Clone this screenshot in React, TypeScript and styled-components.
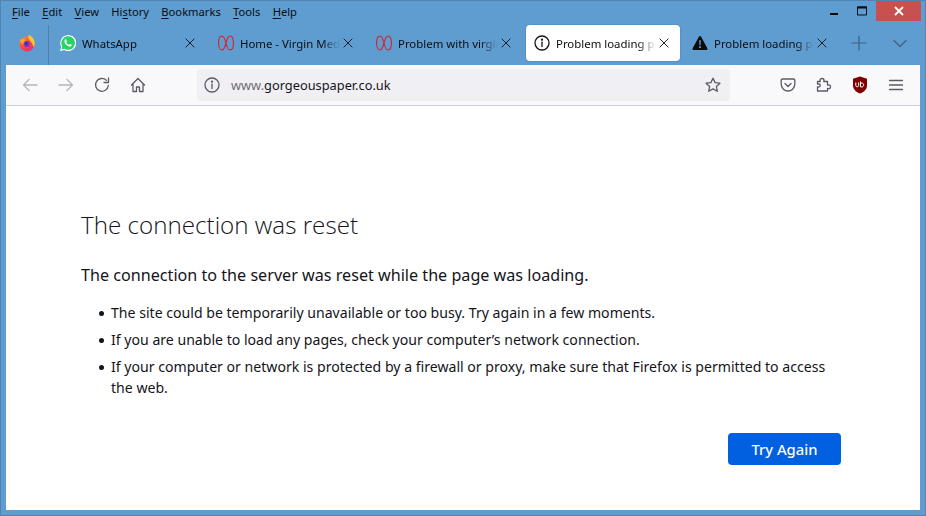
import React from 'react'
import styled, { createGlobalStyle } from 'styled-components'

const GlobalStyle = createGlobalStyle`
  html, body { margin: 0; padding: 0; background: #5f9dd1; }
  * { box-sizing: border-box; }
`

const Frame = styled.div`
  width: 926px;
  height: 516px;
  background: #5f9dd1;
  border: 1px solid #4f84b3;
  padding: 0 0 5px 0;
  display: flex;
  flex-direction: column;
  font-family: 'Noto Sans', 'Open Sans', sans-serif;
  overflow: hidden;
`

const MenuRow = styled.div`
  height: 24px;
  display: flex;
  align-items: flex-start;
  padding: 0 4px 0 11px;
`

const Menu = styled.div`
  display: flex;
  gap: 12.3px;
  flex: 1;
  padding-top: 2px;
`

const MenuItem = styled.span`
  font-size: 11.2px;
  line-height: 17px;
  color: #0c0c0d;
  u { text-underline-offset: 2px; }
`

const WinButton = styled.div<{ $close?: boolean }>`
  width: ${p => (p.$close ? '45px' : '28px')};
  height: 20px;
  background: ${p => (p.$close ? '#c75050' : 'transparent')};
  display: flex;
  align-items: center;
  justify-content: center;
`

const TabRow = styled.div`
  height: 40px;
  display: flex;
  align-items: flex-start;
  padding: 0 0 0 5px;
`

const FoxButton = styled.div`
  width: 43px;
  height: 40px;
  flex: none;
  border-right: 1px solid #4f7ea8;
  margin-right: 3px;
  padding-right: 1px;
  display: flex;
  align-items: center;
  justify-content: center;
  padding-bottom: 4px;
`

const Tab = styled.div<{ $active?: boolean }>`
  width: 154px;
  height: 36px;
  flex: none;
  margin-right: 4px;
  padding: 0 8px;
  display: flex;
  align-items: center;
  border-radius: 4px;
  background: ${p => (p.$active ? '#ffffff' : 'transparent')};
  box-shadow: ${p => (p.$active ? '0 0 2px rgba(0,0,0,0.25)' : 'none')};
`

const TabIcon = styled.div`
  width: 16px;
  height: 16px;
  flex: none;
  margin-right: 6px;
  display: flex;
`

const TabLabel = styled.span`
  flex: 1;
  min-width: 0;
  padding-top: 1px;
  font-size: 11.4px;
  line-height: 18px;
  color: #0c0c0d;
  white-space: nowrap;
  mask-image: linear-gradient(to right, #000 82%, transparent 100%);
`

const TabClose = styled.div`
  width: 16px;
  height: 16px;
  flex: none;
  display: flex;
  align-items: center;
  justify-content: center;
`

const TabAction = styled.div<{ $w: number }>`
  width: ${p => p.$w}px;
  height: 36px;
  flex: none;
  display: flex;
  align-items: center;
  justify-content: center;
`

const Toolbar = styled.div`
  height: 41px;
  margin: 0 5px;
  background: #f9f9fb;
  border-bottom: 1px solid #cfcfd8;
  display: flex;
  align-items: center;
  padding: 0 7px 1px 6px;
`

const ToolButton = styled.div<{ $w?: number }>`
  width: ${p => p.$w ?? 36}px;
  height: 32px;
  flex: none;
  display: flex;
  align-items: center;
  justify-content: center;
`

const UrlBar = styled.div`
  width: 533px;
  height: 32px;
  margin: 0 40px 0 41px;
  flex: none;
  background: #f0f0f4;
  border-radius: 4px;
  display: flex;
  align-items: center;
  padding: 0 9px 0 7px;
`

const UrlText = styled.span`
  flex: 1;
  margin-left: 11px;
  font-size: 12.8px;
  color: #15141a;
  span { color: #6d6d76; }
`

const Page = styled.main`
  flex: 1;
  margin: 0 5px;
  background: #ffffff;
  padding: 103px 0 0 75px;
  color: #15141a;
`

const Title = styled.h1`
  margin: 0 0 23px;
  font-family: 'Open Sans', 'Noto Sans', sans-serif;
  font-weight: 300;
  font-size: 24.2px;
  line-height: 32px;
`

const Lead = styled.p`
  margin: 0 0 17px;
  font-size: 16.15px;
  line-height: 22px;
`

const Reasons = styled.ul`
  margin: 0;
  padding: 0 0 0 30px;
  width: 750px;
  list-style: none;
  font-size: 14.1px;
  line-height: 20.5px;
  li { margin-bottom: 6.7px; }
  li::before {
    content: '';
    float: left;
    width: 5px;
    height: 5px;
    margin: 8px 0 0 -12px;
    border-radius: 50%;
    background: #15141a;
  }
`

const Actions = styled.div`
  width: 760px;
  display: flex;
  justify-content: flex-end;
  margin-top: 35px;
`

const Retry = styled.button`
  width: 113px;
  height: 32px;
  border: none;
  border-radius: 4px;
  background: #0060df;
  color: #fbfbfe;
  font-family: inherit;
  font-size: 14.8px;
  font-weight: 500;
  padding: 0;
`

const Glyph = ({ children, size = 16, color = '#5b5b66', width = 1.3 }: { children: React.ReactNode; size?: number; color?: string; width?: number }) => (
  <svg width={size} height={size} viewBox="0 0 16 16" fill="none" stroke={color} strokeWidth={width} strokeLinecap="round" strokeLinejoin="round">
    {children}
  </svg>
)

const CloseIcon = () => (
  <Glyph size={10} color="#15141a" width={1.5}>
    <path d="M1.500 1.500l13 13M14.500 1.500l-13 13" />
  </Glyph>
)

const InfoIcon = ({ color = '#15141a', width = 1.3 }: { color?: string; width?: number }) => (
  <Glyph color={color} width={width}>
    <circle cx="8" cy="8" r="7" />
    <path d="M8 7.200v4.300" />
    <circle cx="8" cy="4.700" r=".5" fill={color} />
  </Glyph>
)

const VirginIcon = () => (
  <svg width="16" height="16" viewBox="0 0 16 16" fill="none" stroke="#d3222f" strokeWidth="1.1">
    <path d="M7.800 7.500C7 4 5.700 1 3.700 1 1.700 1 .6 3.900.6 7.800c0 3.900 1.200 7.200 3.200 7.200 2.100 0 3.300-3.500 4.200-7 .9-3.600 2-7 4.200-7 2 0 3.200 3.100 3.200 7s-1.200 7-3.200 7c-2 0-3.500-3.600-4.400-7.500z" />
  </svg>
)

const WhatsAppIcon = () => (
  <svg width="16" height="16" viewBox="0 0 16 16">
    <path d="M0 16l1.200-4.200A8 8 0 1 1 4.300 15z" fill="#fff" />
    <path d="M1.400 14.600l.9-3.100A6.800 6.800 0 1 1 4.600 13.800z" fill="#25d366" />
    <path d="M5.900 4.200c-.3 0-.6.1-.8.4-.4.4-.8 1-.7 1.800.1 1 .7 2.200 1.800 3.300 1.200 1.100 2.400 1.800 3.600 1.900.8 0 1.400-.4 1.700-.9.2-.3.2-.7.2-.9-.5-.4-1.100-.7-1.700-.9-.2 0-.3 0-.4.2l-.5.6c-.1.1-.3.1-.4.1-1-.4-1.900-1.200-2.400-2.200-.1-.1 0-.3.1-.4l.4-.5c.1-.1.1-.3 0-.4l-.6-1.800c-.1-.2-.2-.3-.3-.3z" fill="#fff" />
  </svg>
)

const WarningIcon = () => (
  <svg width="16" height="16" viewBox="0 0 16 16">
    <path d="M8 1c-.4 0-.8.2-1 .6L.7 13.200c-.5 1 .1 1.800 1 1.800h12.600c.9 0 1.500-.8 1-1.800L9 1.600C8.800 1.200 8.400 1 8 1z" fill="#0c0c0d" />
    <path d="M7.200 5.200h1.600l-.2 5H7.400zM7.100 11.300h1.800v1.600H7.100z" fill="#5f9dd1" />
  </svg>
)

const FirefoxIcon = () => (
  <svg width="16" height="18" viewBox="0 0 16 18">
    <defs>
      <linearGradient id="fx" x1="0.1" y1="0.1" x2="0.7" y2="1">
        <stop offset="0" stopColor="#ff8a2e" />
        <stop offset=".55" stopColor="#f9453f" />
        <stop offset="1" stopColor="#e5307a" />
      </linearGradient>
    </defs>
    <circle cx="8" cy="10" r="7.600" fill="url(#fx)" />
    <path d="M9.800.8c2.200 1.400 5.800 3.800 6 8.400 0 1.200-.4 2.800-1.300 4-.8-2.600-1.500-5.200-4-7.300C9.300 4.500 9.200 2.500 9.800.8z" fill="#ffc42e" />
    <path d="M1 6c2-1.300 4.500-1.300 6.500.2C5 6.700 3.800 8 4 10.500 2.400 9.500 1.400 7.800 1 6z" fill="#ffa52e" />
    <circle cx="7.800" cy="10" r="2.900" fill="#6f35c9" />
    <circle cx="7.300" cy="9.500" r="1.100" fill="#3c1f8f" />
  </svg>
)

const UBlockIcon = () => (
  <svg width="16" height="18" viewBox="0 0 16 18">
    <path d="M8 .6l7 2.200v6.400c0 4.200-3.200 7-7 8.200-3.800-1.200-7-4-7-8.200V2.800z" fill="#800000" />
    <path d="M3.800 6.500v3.200c0 1.400 2.800 1.400 2.800 0V6.500M8.500 5.500v5.400H10c2.200 0 2.200-3.800 0-3.800H8.500" fill="none" stroke="#fff" strokeWidth="1" />
  </svg>
)

const tabs = [
  { title: 'WhatsApp', icon: <WhatsAppIcon /> },
  { title: 'Home - Virgin Med', icon: <VirginIcon /> },
  { title: 'Problem with virgin', icon: <VirginIcon /> },
  { title: 'Problem loading pa', icon: <InfoIcon />, active: true },
  { title: 'Problem loading pa', icon: <WarningIcon /> },
]

const menus: [string, string, string][] = [
  ['', 'F', 'ile'],
  ['', 'E', 'dit'],
  ['', 'V', 'iew'],
  ['Hi', 's', 'tory'],
  ['', 'B', 'ookmarks'],
  ['', 'T', 'ools'],
  ['', 'H', 'elp'],
]

export default function App() {
  return (
    <Frame>
      <GlobalStyle />
      <MenuRow>
        <Menu>
          {menus.map(([before, key, after]) => (
            <MenuItem key={key + after}>
              {before}
              <u>{key}</u>
              {after}
            </MenuItem>
          ))}
        </Menu>
        <WinButton>
          <svg width="10" height="10" viewBox="0 0 10 10"><path d="M1 8h8" stroke="#0c0c0d" strokeWidth="2" /></svg>
        </WinButton>
        <WinButton>
          <svg width="12" height="10" viewBox="0 0 12 10" fill="none"><path d="M1.500 1v8h9V1z" stroke="#0c0c0d" strokeWidth="1" /><path d="M1 1.500h10" stroke="#0c0c0d" strokeWidth="2" /></svg>
        </WinButton>
        <WinButton $close>
          <svg width="10" height="10" viewBox="0 0 10 10"><path d="M1 1l8 8M9 1L1 9" stroke="#fff" strokeWidth="1.800" /></svg>
        </WinButton>
      </MenuRow>
      <TabRow>
        <FoxButton><FirefoxIcon /></FoxButton>
        {tabs.map((tab, i) => (
          <Tab key={i} $active={tab.active}>
            <TabIcon>{tab.icon}</TabIcon>
            <TabLabel>{tab.title}</TabLabel>
            <TabClose><CloseIcon /></TabClose>
          </Tab>
        ))}
        <TabAction $w={34}>
          <Glyph color="#3f5f7f" width={1.2}><path d="M8 1v14M1 8h14" /></Glyph>
        </TabAction>
        <TabAction $w={48}>
          <Glyph color="#3f5f7f" width={1.2}><path d="M2 5.500l6 6 6-6" /></Glyph>
        </TabAction>
      </TabRow>
      <Toolbar>
        <ToolButton><Glyph color="#b4b4ba"><path d="M15 8H1.500M7 2.500L1.500 8 7 13.500" /></Glyph></ToolButton>
        <ToolButton><Glyph color="#b4b4ba"><path d="M1 8h13.500M9 2.500L14.500 8 9 13.500" /></Glyph></ToolButton>
        <ToolButton>
          <Glyph><path d="M14.300 8.500A6.400 6.400 0 1 1 12.500 3.400" /><path d="M14.500 1v4.500H10" /></Glyph>
        </ToolButton>
        <ToolButton>
          <Glyph><path d="M1.500 8L8 1.500 14.500 8M3 7v7.500h3.500V10h3v4.500H13V7" /></Glyph>
        </ToolButton>
        <UrlBar>
          <InfoIcon color="#5b5b66" />
          <UrlText><span>www.</span>gorgeouspaper.co.uk</UrlText>
          <Glyph><path d="M8 1.200l2.100 4.400 4.800.6-3.500 3.300.9 4.800L8 11.900 3.700 14.300l.9-4.800L1.100 6.200l4.800-.6z" /></Glyph>
        </UrlBar>
        <ToolButton>
          <Glyph><path d="M2.500 2h11c.8 0 1.300.6 1.300 1.300V7c0 3.900-3 7-6.800 7S1.200 10.900 1.200 7V3.300C1.200 2.600 1.700 2 2.500 2z" /><path d="M5 6.500l3 3 3-3" /></Glyph>
        </ToolButton>
        <ToolButton>
          <Glyph><path d="M6 1.500c1.300 0 2 .8 2 1.800 0 .5-.2.9-.3 1.200h3.800v3.700c.3-.2.700-.3 1.200-.3 1.100 0 1.800.8 1.800 1.900s-.7 1.900-1.800 1.900c-.5 0-.9-.1-1.200-.3v2.600H1.500v-4h1.200c1 0 1.600-.7 1.600-1.500S3.700 7 2.700 7H1.500V4.500h2.800C4.200 4.200 4 3.800 4 3.300c0-1 .8-1.800 2-1.800z" /></Glyph>
        </ToolButton>
        <ToolButton><UBlockIcon /></ToolButton>
        <ToolButton>
          <Glyph><path d="M1.500 3.500h13M1.500 8h13M1.500 12.500h13" /></Glyph>
        </ToolButton>
      </Toolbar>
      <Page>
        <Title>The connection was reset</Title>
        <Lead>The connection to the server was reset while the page was loading.</Lead>
        <Reasons>
          <li>The site could be temporarily unavailable or too busy. Try again in a few moments.</li>
          <li>If you are unable to load any pages, check your computer’s network connection.</li>
          <li>If your computer or network is protected by a firewall or proxy, make sure that Firefox is permitted to access the web.</li>
        </Reasons>
        <Actions><Retry>Try Again</Retry></Actions>
      </Page>
    </Frame>
  )
}
